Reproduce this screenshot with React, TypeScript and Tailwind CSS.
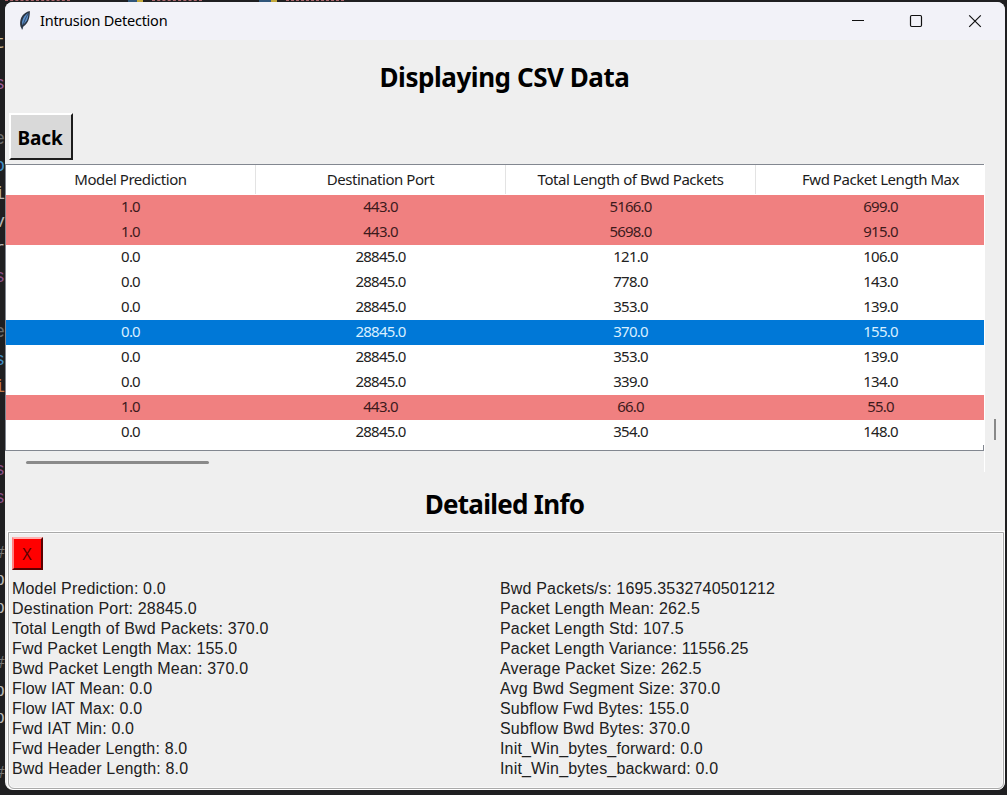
const columns = ["Model Prediction", "Destination Port", "Total Length of Bwd Packets", "Fwd Packet Length Max"];

const rows = [
  { tone: "attack", cells: ["1.0", "443.0", "5166.0", "699.0"] },
  { tone: "attack", cells: ["1.0", "443.0", "5698.0", "915.0"] },
  { tone: "normal", cells: ["0.0", "28845.0", "121.0", "106.0"] },
  { tone: "normal", cells: ["0.0", "28845.0", "778.0", "143.0"] },
  { tone: "normal", cells: ["0.0", "28845.0", "353.0", "139.0"] },
  { tone: "selected", cells: ["0.0", "28845.0", "370.0", "155.0"] },
  { tone: "normal", cells: ["0.0", "28845.0", "353.0", "139.0"] },
  { tone: "normal", cells: ["0.0", "28845.0", "339.0", "134.0"] },
  { tone: "attack", cells: ["1.0", "443.0", "66.0", "55.0"] },
  { tone: "normal", cells: ["0.0", "28845.0", "354.0", "148.0"] },
];

const tones: Record<string, string> = {
  attack: "bg-[#f08080] text-[#3d1a1c]",
  normal: "bg-white text-[#222]",
  selected: "bg-[#0078d7] text-[#d9efff]",
};

const leftInfo = [
  "Model Prediction: 0.0",
  "Destination Port: 28845.0",
  "Total Length of Bwd Packets: 370.0",
  "Fwd Packet Length Max: 155.0",
  "Bwd Packet Length Mean: 370.0",
  "Flow IAT Mean: 0.0",
  "Flow IAT Max: 0.0",
  "Fwd IAT Min: 0.0",
  "Fwd Header Length: 8.0",
  "Bwd Header Length: 8.0",
];

const rightInfo = [
  "Bwd Packets/s: 1695.3532740501212",
  "Packet Length Mean: 262.5",
  "Packet Length Std: 107.5",
  "Packet Length Variance: 11556.25",
  "Average Packet Size: 262.5",
  "Avg Bwd Segment Size: 370.0",
  "Subflow Fwd Bytes: 155.0",
  "Subflow Bwd Bytes: 370.0",
  "Init_Win_bytes_forward: 0.0",
  "Init_Win_bytes_backward: 0.0",
];

// Editor lines that show behind the window's left edge, one per 27.6px line.
const editorGlyphs = [
  ["t", "text-[#c9b98f]"],
  ["s", "text-[#9b5c97]"],
  ["", ""],
  ["e", "text-[#6b6b6b]"],
  ["o", "text-[#3f8fc9]"],
  ["i", "text-[#b5b5b5]"],
  ["v", "text-[#b5b5b5]"],
  ["r", "text-[#b5b5b5]"],
  ["s", "text-[#8c4f88]"],
  ["", ""],
  ["e", "text-[#6b6b6b]"],
  ["s", "text-[#3f8fc9]"],
  ["i", "text-[#c27a4a]"],
  ["", ""],
  ["", ""],
  ["s", "text-[#8c4f88]"],
  ["s", "text-[#8c4f88]"],
  ["", ""],
  ["#", "text-[#777]"],
  ["p", "text-[#b5b5b5]"],
  ["p", "text-[#b5b5b5]"],
  ["", ""],
  ["#", "text-[#777]"],
  ["p", "text-[#b5b5b5]"],
  ["p", "text-[#b5b5b5]"],
  ["", ""],
  ["#", "text-[#777]"],
];

function Feather() {
  return (
    <svg width="14" height="22" viewBox="0 0 14 22" className="shrink-0">
      <path d="M11.800 1C8.500 1.500 5 4 3.300 7.500 2 10.500 1.800 14 2.500 16.500l1.500 2.800 1-2.500c3-1.800 5.200-4.600 6-8.300.6-2.500 1-5 .8-7.500z" fill="#2b3543" />
      <path d="M10.300 3C7 4.500 4.800 7.500 4 12l.4 3c2.600-1.500 4.600-4 5.400-7 .5-2 .7-3.500.5-5z" fill="#5b8fca" />
      <path d="M10.300 3.500C7.800 7.500 5.500 12 4.200 19.500" fill="none" stroke="#27384f" strokeWidth=".8" />
    </svg>
  );
}

function TitleBar() {
  return (
    <header className="flex h-[38px] shrink-0 items-center bg-[#f2f2f8] pl-[13px] text-black">
      <Feather />
      <span className="-mt-[2px] ml-2 text-[14.5px] leading-5 tracking-[-0.25px] whitespace-nowrap">Intrusion Detection</span>
      <svg width="160" height="38" viewBox="0 0 160 38" className="ml-auto" fill="none" stroke="#111" strokeWidth="1.200">
        <path d="M7 18.500h12" />
        <rect x="65.500" y="13.500" width="11" height="11" rx="1.200" />
        <path d="M124.200 13.300l11.600 11.600M135.800 13.300l-11.600 11.600" />
      </svg>
    </header>
  );
}

function DataTable() {
  return (
    <div className="relative h-[287px] w-[979px] border-y border-l border-[#828790] bg-white">
      <div className="overflow-hidden">
        <div className="flex h-[30px] w-[1000px] text-[15px] text-[#1c1c1c]">
          {columns.map((title) => (
            <div key={title} className="h-[29px] w-[250px] shrink-0 border-r border-[#e3e3e3] text-center leading-[28px] tracking-[-0.45px] whitespace-nowrap">
              {title}
            </div>
          ))}
        </div>
        {rows.map((r, i) => (
          <div key={i} className={`flex h-[25px] w-[1000px] ${tones[r.tone]}`}>
            {r.cells.map((v, j) => (
              <div key={j} className="w-[250px] shrink-0 pr-px text-center text-[15px] leading-[23px] tracking-[-0.8px]">{v}</div>
            ))}
          </div>
        ))}
      </div>
      <span className="absolute right-0 bottom-0 h-[5px] w-px bg-[#828790]" />
    </div>
  );
}

function InfoColumn({ lines }: { lines: string[] }) {
  return (
    <div className="font-['Liberation_Sans',sans-serif] text-[16px] leading-5 tracking-[0.17px] whitespace-nowrap text-[#202020]">
      {lines.map((l) => (
        <p key={l}>{l}</p>
      ))}
    </div>
  );
}

export default function App() {
  return (
    <div className="relative h-[795px] w-[1007px] overflow-hidden bg-[#1f1f21] pt-[2px] pl-[5px] font-['Noto_Sans','Liberation_Sans',sans-serif]">
      <div className="absolute top-[43px] left-0 w-[5px] overflow-hidden font-['Liberation_Mono',monospace] text-[18px]">
        {editorGlyphs.map(([g, color], i) => (
          <div key={i} className={`flex h-[27.600px] w-[5px] justify-end leading-[27.600px] ${color}`}>{i === 0 ? "" : g}</div>
        ))}
      </div>
      <div className="absolute top-[30px] left-0 flex h-[27px] w-[5px] justify-end overflow-hidden font-['Liberation_Mono',monospace] text-[18px] leading-[27px] text-[#c9b98f]">
        {editorGlyphs[0][0]}
      </div>
      <div className="absolute top-0 left-0 flex h-[2px] w-[350px] items-start">
        <span className="ml-[5px] h-px w-[65px] border-t border-dashed border-[#a8656b]" />
        <span className="ml-[58px] h-[2px] w-[9px] bg-[#31567a]" />
        <span className="h-[2px] w-[6px] bg-[#c2a83c]" />
        <span className="ml-[9px] h-px w-[50px] border-t border-dashed border-[#a8656b]" />
        <span className="ml-[57px] h-[2px] w-[12px] bg-[#31567a]" />
        <span className="h-[2px] w-[6px] bg-[#c2a83c]" />
        <span className="ml-[9px] h-px w-[58px] border-t border-dashed border-[#a8656b]" />
      </div>

      <div className="relative flex h-[788px] w-[1000px] flex-col overflow-hidden rounded-lg bg-[#efefef]">
        <TitleBar />
        <h1 className="mt-[19px] h-[36px] pr-px text-center text-[26px] leading-[36px] font-bold tracking-[-0.45px] text-black">Displaying CSV Data</h1>
        <button className="mt-[18px] ml-1 h-[47px] w-[64px] shrink-0 border-2 border-t-white border-r-[#1c1c1c] border-b-[#1c1c1c] border-l-white bg-[#d9d9d9] pt-px pr-[2px] text-[19px] leading-[44px] font-bold tracking-[-0.1px] text-black">
          Back
        </button>
        <div className="mt-1 flex h-[308px] shrink-0">
          <div className="flex flex-col">
            <DataTable />
            <div className="mt-[10px] ml-[21px] h-[3px] w-[183px] rounded-full bg-[#8a8a8a]" />
          </div>
          <div className="w-px bg-white" />
          <div className="mt-[255px] ml-[9px] h-[21px] w-[2px] bg-[#888]" />
        </div>
        <h2 className="mt-[14px] h-[36px] pr-px text-center text-[26px] leading-[36px] font-bold tracking-[-0.720px] text-black">Detailed Info</h2>
        <section className="mt-[10px] ml-[3px] h-[257px] w-[996px] shrink-0 rounded-b-md border border-[#a9a9a9] shadow-[0_0_0_1px_#fff,inset_0_0_0_1px_#f8f8f8]">
          <button className="mt-1 ml-[3px] block h-[33px] w-[31px] border-2 border-t-[#ffb0b0] border-r-[#5a0000] border-b-[#5a0000] border-l-[#ff8080] bg-[#ff0000] pr-px text-[16px] leading-[26px] text-[#5c0000]">
            X
          </button>
          <div className="mt-[9px] ml-[3px] flex">
            <div className="w-[488px]">
              <InfoColumn lines={leftInfo} />
            </div>
            <InfoColumn lines={rightInfo} />
          </div>
        </section>
      </div>
    </div>
  );
}
